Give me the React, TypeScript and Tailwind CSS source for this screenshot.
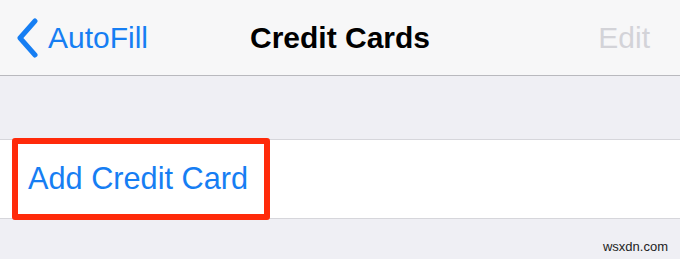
export default function App() {
  return (
    <main className="relative h-[259px] w-[680px] overflow-hidden bg-[#efeff4] font-['Liberation_Sans',Arial,sans-serif]">
      <header className="relative flex h-[76px] items-center justify-between border-b border-[#b9b9be] bg-[#f7f7f8] pl-[16px] pr-[30px]">
        <div className="flex items-center gap-[10px] text-[30px] text-[#167ef3]">
          <svg width="22" height="40" viewBox="0 0 22 40" fill="none" className="mt-[1px]">
            <path d="M19 3 L4 20 L19 37" stroke="#167ef3" strokeWidth="5" strokeLinecap="round" strokeLinejoin="round" />
          </svg>
          <span className="leading-none">AutoFill</span>
        </div>
        <h1 className="absolute left-1/2 -translate-x-1/2 text-[30px] font-bold leading-none text-black">
          Credit Cards
        </h1>
        <span className="text-[30px] leading-none text-[#d3d3d8]">Edit</span>
      </header>

      <div className="h-[63px]" />

      <div className="relative flex h-[80px] items-center border-y border-[#d6d6db] bg-white pl-[28px]">
        <span className="text-[30.7px] leading-none text-[#167ef3]">Add Credit Card</span>
        <div className="absolute left-[12px] top-[-2px] h-[82px] w-[258px] rounded-[3px] border-[6px] border-[#ff2a0a]" />
      </div>

      <span className="absolute bottom-[3px] right-[12px] text-[13px] text-[#222]">wsxdn.com</span>
    </main>
  );
}
